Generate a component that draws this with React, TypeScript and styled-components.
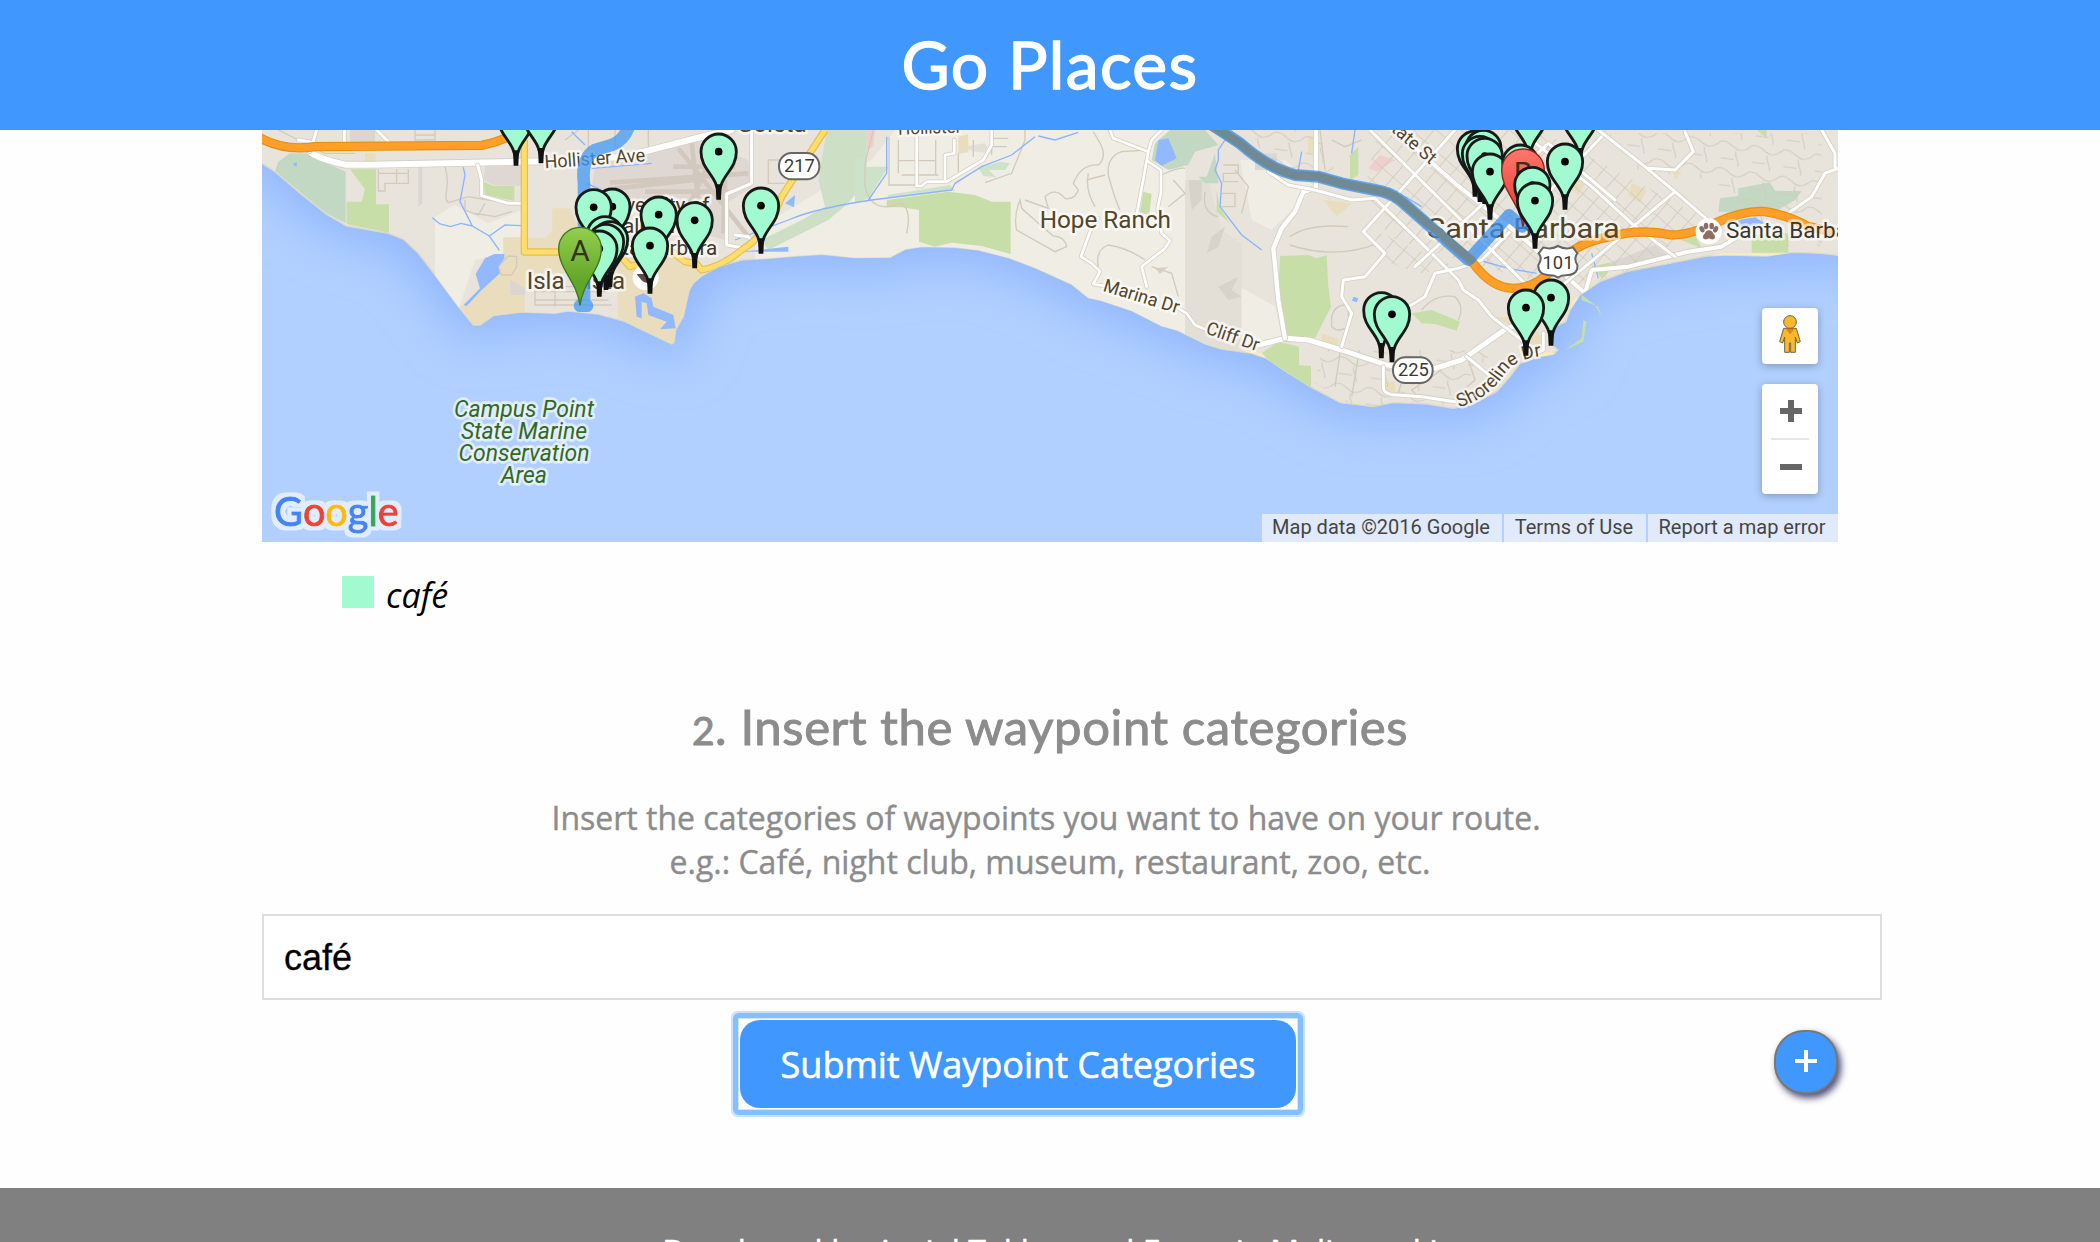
import React from "react";
import styled, { createGlobalStyle } from "styled-components";

const GlobalStyle = createGlobalStyle`
  * { box-sizing: border-box; }
  html, body { margin: 0; padding: 0; background: #fff; }
  body { height: 1242px; overflow: hidden; }
`;

const Page = styled.div`
  width: 2100px;
  height: 1242px;
  overflow: hidden;
  display: flex;
  flex-direction: column;
  background: #fefefe;
  font-family: "Open Sans", sans-serif;
`;

const Header = styled.header`
  flex: none;
  height: 130px;
  padding-bottom: 2px;
  background: #4098ff;
  display: flex;
  align-items: center;
  justify-content: center;
`;

const Title = styled.h1`
  margin: 0;
  font: 400 66px/80px Lato, sans-serif;
  letter-spacing: 1.4px;
  -webkit-text-stroke: 1.4px #fff;
  color: #fff;
  white-space: nowrap;
`;

const Content = styled.main`
  flex: none;
  width: 1576px;
  height: 1058px;
  margin: 0 auto;
  display: flex;
  flex-direction: column;
`;

const MapFrame = styled.section`
  position: relative;
  flex: none;
  height: 412px;
  overflow: hidden;
  background: #b1d0ff;
`;

const MapDrawing = styled.svg`
  display: block;
  width: 1576px;
  height: 412px;
  font-family: Roboto, sans-serif;
`;

const MapControls = styled.div`
  position: absolute;
  right: 20px;
  top: 178px;
  display: flex;
  flex-direction: column;
  gap: 20px;
`;

const ControlBox = styled.div<{ $height: number }>`
  width: 56px;
  height: ${(p) => p.$height}px;
  border-radius: 4px;
  background: #fff;
  box-shadow: 0 2px 8px rgba(0, 0, 0, 0.28);
  display: flex;
  flex-direction: column;
  align-items: center;
  justify-content: center;
`;

const PegmanIcon = styled.svg`
  margin-bottom: 4px;
`;

const ZoomHalf = styled.button`
  flex: 1;
  width: 38px;
  padding: 0 0 0 2px;
  border: 0;
  background: none;
  display: grid;
  place-items: center;
  & + & { border-top: 2px solid #e6e6e6; }
`;

const Attribution = styled.div`
  position: absolute;
  right: 0;
  bottom: 0;
  display: flex;
  gap: 2px;
`;

const AttributionItem = styled.span<{ $width: number }>`
  width: ${(p) => p.$width}px;
  height: 28px;
  padding-right: 2px;
  background: #e1eafa;
  color: #444;
  font: 400 20px/26px Roboto, sans-serif;
  text-align: center;
  white-space: nowrap;
`;

const Legend = styled.div`
  flex: none;
  height: 98px;
  padding: 34px 0 0 80px;
  display: flex;
  gap: 12px;
  color: #000;
  font: italic 400 34px/38px "Open Sans", sans-serif;
`;

const Swatch = styled.span`
  width: 32px;
  height: 32px;
  background: #a1fad0;
`;

const Heading = styled.h2`
  flex: none;
  margin: 56px 0 0;
  height: 62px;
  font: 400 49px/60px Lato, sans-serif;
  letter-spacing: 0.6px;
  color: #8c8c8c;
  text-align: center;
  white-space: nowrap;
  -webkit-text-stroke: 1px #8c8c8c;
`;

const OldStyleFigure = styled.span`
  font-size: 39px;
`;

const Lead = styled.p`
  flex: none;
  margin: 38px 0 0;
  height: 106px;
  padding-right: 8px;
  font: 400 32px/44px "Open Sans", sans-serif;
  color: #8c8c8c;
  -webkit-text-stroke: 0.4px #8c8c8c;
  text-align: center;
  white-space: nowrap;
`;

const LeadLine = styled.span<{ $shift?: number }>`
  display: block;
  padding-left: ${(p) => p.$shift ?? 0}px;
`;

const CategoryInput = styled.input`
  flex: none;
  width: 1620px;
  height: 86px;
  margin-top: 12px;
  padding: 2px 20px 0;
  border: 2px solid #ddd;
  border-radius: 0;
  outline: none;
  background: #fff;
  color: #000;
  font: 400 36px/42px "Liberation Sans", Arial, sans-serif;
  -webkit-text-stroke: 0.3px #000;
`;

const Actions = styled.div`
  flex: none;
  height: 108px;
  padding-top: 20px;
  display: flex;
  justify-content: space-between;
`;

const FocusRing = styled.div`
  width: 560px;
  height: 92px;
  margin: -2px 0 0 476px;
  padding: 2px;
  border-radius: 2px;
  box-shadow: inset 0 0 0 1px #d2e7ff, 0 0 0 5px #84bfff, 0 0 0 7px #c9e2ff;
`;

const SubmitButton = styled.button`
  width: 556px;
  height: 88px;
  padding: 2px 0 0;
  border: 0;
  border-radius: 20px;
  background: #4098ff;
  color: #fff;
  font: 400 36px/48px "Open Sans", sans-serif;
  -webkit-text-stroke: 0.6px #fff;
`;

const AddButton = styled.button`
  width: 64px;
  height: 64px;
  margin-top: 10px;
  padding: 0 0 2px;
  border: 2px solid #777;
  border-radius: 30px;
  background: #4098ff;
  box-shadow: 3px 4px 7px rgba(20, 20, 75, 0.75);
  display: grid;
  place-items: center;
`;

const Footer = styled.footer`
  flex: none;
  height: 120px;
  padding-top: 42px;
  background: #808080;
  color: #fff;
  font: 400 32px/44px "Open Sans", sans-serif;
  letter-spacing: 0.1px;
  -webkit-text-stroke: 0.5px #fff;
  text-align: center;
  white-space: nowrap;
`;

const DROP = "M0,138 C-2,68 -53,58 -53,0 A53,53 0 1 1 53,0 C53,58 2,68 0,138 Z";

function Pin({ x, y }: { x: number; y: number }) {
  return (
    <g transform={`translate(${x} ${y - 2})`}>
      <path d={DROP} fill="#a1fad0" stroke="#151a18" strokeWidth="8.5" />
      <path d="M-9,98 L-7,144 H7 L9,98 Z" fill="#111" />
      <circle r="11.5" fill="#000" />
    </g>
  );
}

function LetterPin({ x, y, letter, from, to, edge }: { x: number; y: number; letter: string; from: string; to: string; edge: string }) {
  const id = "pin" + letter;
  return (
    <g transform={`translate(${x} ${y})`}>
      <defs>
        <linearGradient id={id} x1="0" y1="0" x2="0" y2="1">
          <stop offset="0" stopColor={from} />
          <stop offset="0.7" stopColor={to} />
        </linearGradient>
      </defs>
      <path d="M0,170 C-8,100 -64,62 -64,0 A64,64 0 1 1 64,0 C64,62 8,100 0,170 Z" fill={`url(#${id})`} stroke={edge} strokeWidth="4" />
      <text y="37" fontSize="90" textAnchor="middle" fill="#33331c">{letter}</text>
    </g>
  );
}

type LabelProps = { x?: number; y?: number; size?: number; width?: number; rotate?: number; color?: string; italic?: boolean; anchor?: "start" | "middle"; children: React.ReactNode };
function Label({ x = 0, y = 0, size = 72, width, rotate = 0, color = "#51452b", italic, anchor = "start", children }: LabelProps) {
  return (
    <text
      transform={`translate(${x} ${y}) rotate(${rotate})`}
      fontSize={size}
      textLength={width}
      lengthAdjust="spacingAndGlyphs"
      fill={color}
      fontStyle={italic ? "italic" : "normal"}
      textAnchor={anchor}
      stroke="#fff"
      strokeOpacity="0.6"
      strokeWidth="16"
      strokeLinejoin="round"
      paintOrder="stroke"
    >
      {children}
    </text>
  );
}

function Street({ d, w = 12 }: { d: string; w?: number }) {
  return (
    <g fill="none" strokeLinejoin="round" strokeLinecap="round">
      <path d={d} stroke="#d6d0c4" strokeWidth={w + 5} />
      <path d={d} stroke="#fff" strokeWidth={w} />
    </g>
  );
}

function Highway({ d, w = 22, fill = "#ff9f2a", edge = "#e3920f" }: { d: string; w?: number; fill?: string; edge?: string }) {
  return (
    <g fill="none" strokeLinejoin="round">
      <path d={d} stroke={edge} strokeWidth={w + 6} />
      <path d={d} stroke={fill} strokeWidth={w - 1} />
    </g>
  );
}

const LAND =
  "M0,0 H4800 V412 L4695,400 L4615,397 L4535,408 L4415,405 L4355,408 L4255,428 L4115,455 L4035,485 L3975,525 L3945,570 L3932,605 L3900,620 L3880,665 L3909,690 L3895,703 L3855,710 L3795,730 L3765,770 L3725,815 L3645,855 L3595,865 L3515,852 L3415,848 L3355,860 L3255,848 L3165,800 L3085,750 L3035,715 L2990,700 L2900,687 L2850,672 L2770,632 L2720,618 L2630,572 L2540,542 L2500,533 L2450,493 L2340,443 L2260,413 L2170,390 L2100,382 L2000,380 L1950,388 L1905,412 L1800,413 L1700,403 L1620,408 L1540,415 L1460,420 L1390,440 L1340,468 L1315,490 L1303,510 L1285,590 L1262,630 L1257,668 L1250,672 L1110,605 L1030,582 L940,573 L900,580 L800,576 L715,587 L675,615 L655,615 L610,560 L540,465 L490,400 L445,358 L400,340 L345,330 L275,318 L215,283 L135,220 L60,155 L21,130 L0,120 Z";

function MapBackdrop() {
  return (
    <MapDrawing viewBox="21 30 4728 1236" preserveAspectRatio="none">
      <defs>
        <clipPath id="land"><path d={LAND} /></clipPath>
        <filter id="shore" x="-5%" y="-30%" width="110%" height="170%"><feGaussianBlur stdDeviation="75" /></filter>
        <filter id="halo" x="-10%" y="-20%" width="120%" height="140%">
          <feMorphology in="SourceAlpha" operator="dilate" radius="11" result="grown" />
          <feFlood floodColor="#fff" floodOpacity="0.62" />
          <feComposite in2="grown" operator="in" result="edge" />
          <feMerge><feMergeNode in="edge" /><feMergeNode in="SourceGraphic" /></feMerge>
        </filter>
        <pattern id="blocks" width="42" height="48" patternUnits="userSpaceOnUse" patternTransform="rotate(41)">
          <path d="M0,0 H42 M0,0 V48" stroke="#d2cabb" strokeWidth="5" />
        </pattern>
        <pattern id="suburb" width="95" height="80" patternUnits="userSpaceOnUse" patternTransform="rotate(8)">
          <path d="M0,10 C25,5 35,35 60,30 S85,5 95,10 M42,34 C40,55 60,60 55,90 M0,60 H40" stroke="#d2cabb" strokeWidth="3" fill="none" />
        </pattern>
      </defs>

      <rect x="0" y="0" width="4800" height="1300" fill="#b1d0ff" />
      <path d={LAND} fill="#8fb5fd" stroke="#8fb5fd" strokeWidth="80" filter="url(#shore)" />
      <path d={LAND} fill="#e8e4dc" stroke="#dcd8c8" strokeWidth="4" />

      <g clipPath="url(#land)">
        {/* open country */}
        <path d="M540,290 L600,255 L700,310 L800,270 V352 L745,355 V400 L660,420 L610,570 L540,470 Z" fill="#f0ede5" />
        <path d="M1500,330 L1850,120 L1920,30 H2790 L2800,690 L2500,560 L2200,430 L1900,420 L1500,425 Z" fill="#f0ede5" />
        <path d="M3090,120 L3180,200 L3050,330 L2990,300 L2955,120 Z M2955,500 L3060,560 L3080,650 L2960,670 L2890,600 Z" fill="#f0ede5" />
        <path d="M2120,80 L2190,70 L2210,100 L2160,95 Z M2790,180 H2860 L2900,330 L2960,370 V690 H2790 Z" fill="#e4dfd6" />
        <path d="M2800,180 h40 v60 l-30,30 z M2870,350 l40,-30 -20,60 -35,20 z M2890,500 l60,-30 -20,40 30,20 -40,10 z M2700,445 l40,-5 -25,22 z" fill="#d8d3c9" />

        {/* parks and reserves */}
        <path d="M70,125 L105,100 H155 L215,130 L272,155 V310 L215,280 L140,220 L60,152 Z" fill="#c2d8c3" />
        <path d="M285,148 H363 V253 H402 V338 L275,312 V245 H320 L330,208 Z" fill="#c8dea8" />
        <path d="M685,185 L715,197 H778 V243 L690,225 Z M838,408 H905 V460 H838 Z" fill="#c8dea8" />
        <path d="M1715,30 H1835 V180 L1780,250 L1720,300 L1540,390 L1520,360 L1640,300 L1710,260 L1690,180 Z" fill="#cde0c5" />
        <path d="M1895,240 L2080,215 L2160,225 L2210,245 H2267 V402 L2180,378 L2090,368 L2040,380 L1992,365 V270 L1940,262 H1895 Z" fill="#c8dea8" />
        <path d="M1800,115 H1835 L1830,140 L1900,140 L1840,235 L1800,250 Z M1900,225 L2085,195 L2100,212 L1895,236 Z M2170,145 L2235,125 L2265,130 L2250,150 L2200,150 L2225,172 L2185,168 Z" fill="#cde3c9" />
        <path d="M2700,70 L2745,30 H2850 L2890,75 L2820,95 L2800,135 L2740,150 L2690,120 Z M2800,140 L2830,170 H2855 L2880,100 L2890,190 L2850,190 Z" fill="#c2d8c3" />
        <path d="M2665,215 L2690,222 L2683,285 L2655,278 Z M2885,210 L2895,265 L2925,310 L2885,275 Z" fill="#c8dea8" />
        <path d="M3075,408 L3160,405 L3185,415 L3215,405 L3220,500 L3228,560 L3180,655 L3085,645 L3070,520 Z" fill="#c8dea8" />
        <path d="M3020,700 L3070,665 L3132,680 V735 L3168,738 V802 L3080,755 Z" fill="#c8dea8" />
        <path d="M3470,580 L3530,570 L3615,605 L3605,632 L3540,612 L3500,610 Z M3285,105 L3310,80 V165 L3285,180 Z M4505,30 h30 v25 z" fill="#c8dea8" />
        <path d="M4395,235 L4450,228 V205 L4545,187 L4560,212 L4640,214 L4620,240 L4560,275 H4390 Z" fill="#c2d8c3" />
        <path d="M4490,345 L4600,340 L4600,398 L4490,398 Z M4265,355 L4320,345 L4340,385 Z M4010,440 L4095,420 L4040,475 Z" fill="#c8dea8" />

        {/* campus, schools and sand */}
        <path d="M745,352 H800 L870,355 L892,330 V265 H945 L985,355 V460 H810 V578 L715,587 L675,617 L655,617 L612,562 L640,550 L745,420 Z" fill="#e9ddbd" />
        <path d="M1090,430 L1150,400 L1250,390 L1330,440 L1340,470 L1300,520 L1255,675 L1110,605 L1088,590 Z" fill="#e9ddbd" />
        <path d="M810,460 H1060 V590 H810 Z" fill="#e8e4dc" />
        <path d="M330,100 h32 v25 h-32 z M2110,50 l30,-8 v55 l-30,5 z M3205,240 L3290,250 L3245,290 Z M3200,640 l50,18 v20 l-50,-15 z M3390,785 h30 v35 h-30 z M3159,50 h20 v50 h-20 z M3720,590 L3790,590 L3840,630 L3860,650 V700 L3790,630 Z M3955,170 l35,20 -20,35 -30,-20 z M4130,190 l45,20 -20,40 -35,-25 z M4250,145 l30,15 -20,18 z" fill="#e9ddbd" />
        <path d="M3375,105 L3420,120 L3365,155 L3340,145 Z M1835,30 h25 l-5,50 -20,10 z" fill="#eecfcb" />
        <path d="M3932,605 L3955,540 L4040,485 L4355,410 L4400,400 H4700 V414 L4535,412 L4355,414 L4115,462 L3990,530 Z M3850,690 l60,12 -60,20 z M2960,690 l60,10 20,22 z" fill="#f8ecc0" />

        {/* airport */}
        <path d="M690,135 H810 V198 L715,195 L685,180 Z M1020,130 L1330,60 L1480,120 L1490,200 L1400,260 L1410,360 L1300,330 L1120,250 L1010,210 Z" fill="#dfd8d2" />
        <path d="M1065,188 L1480,160 M1080,205 L1320,180 M1170,215 L1420,215 M1270,85 L1480,350 M1310,70 L1330,240 M1370,110 L1300,260 M1255,140 H1440 M1410,180 L1405,340" stroke="#d3c8be" strokeWidth="14" fill="none" />
        <path d="M285,30 h75 v55 h-75 z M490,140 h12 v110 l-12,10 z M765,480 l45,25 v20 h-45 z M3000,100 H3065 V150 H3000 Z M4060,430 L4200,375 L4245,410 L4100,440 Z" fill="#dbd6cf" />

        {/* small streets */}
        <path d="M3370,30 H3855 L4360,300 L4300,340 L4120,460 L3960,500 L3830,480 L3640,430 L3400,350 L3330,200 Z" fill="url(#blocks)" />
        <path d="M3330,320 L3600,440 L3500,460 L3370,420 Z" fill="url(#blocks)" />
        <path d="M4060,40 H4700 V380 H4560 L4380,180 L4150,150 Z M3200,690 H3720 L3560,860 H3300 L3180,790 Z M2960,30 H3180 L3250,170 H3100 Z" fill="url(#suburb)" />
        <g fill="none" stroke="#d2cabb" strokeWidth="4">
          <path d="M370,148 V213 H390 V190 H460 V148 M425,148 V190 M370,160 H462 M480,30 V60 H540 V30 M480,45 H540 M570,140 C590,200 560,230 580,248 L640,230 L700,240 L760,245 M630,240 V270 L670,285 L690,250 M660,280 L720,290 L770,275" />
          <path d="M840,500 H1050 M840,515 H1050 M840,540 H1060 M840,555 H1070 M840,490 V555 M900,490 V560 M730,440 L760,408 L785,410 V440 L770,465 H740 Z M930,60 L970,30 M1000,90 V30 M1080,85 V30 M1180,80 V30 M1540,120 V190 H1590 M1540,120 H1600 M70,30 L130,60 L210,100 H300" />
          <path d="M1902,50 V195 H1985 M1930,60 V160 M1930,122 H2040 M1940,165 H2050 M2042,60 V165 M2110,100 V155 M2155,60 V110 M2210,40 V105 M2210,55 H2260 M2210,80 H2255 M2190,188 L2270,160 L2310,60 V30 M1855,30 L1830,130 V200 Q1845,265 1900,260 L1940,250 Q1970,270 1955,340" />
          <path d="M2295,240 Q2275,290 2285,330 L2400,395 L2435,380 Q2430,350 2395,348 L2350,310 L2300,265 Z M2310,240 L2380,265 L2370,230 Q2400,200 2430,235 Q2460,240 2470,210 L2455,190 Q2480,130 2530,135 Q2560,110 2530,60 L2515,35 M2500,160 Q2490,210 2520,260 M2560,165 Q2580,240 2595,270 M2560,165 Q2555,110 2600,95 L2680,90 M2495,180 L2550,165 M2530,440 Q2520,390 2560,375 Q2620,385 2670,420 M2690,440 L2750,460 L2770,530 M2720,165 Q2770,140 2790,145 M2755,180 L2790,220 L2740,260" />
          <path d="M2905,135 H2950 V160 H2905 V185 H2950 M2900,220 H2940 V260 H2900 M2850,215 Q2840,280 2890,290 M2940,150 L2980,200 L2960,280 M3195,30 L3210,150 M3230,60 L3270,80 L3320,60 M3105,350 Q3160,310 3280,320 M3105,375 Q3240,420 3370,370 M3230,590 Q3240,550 3280,555 V620 Q3250,640 3230,620 Z M3500,570 Q3540,520 3600,530 Q3630,560 3610,600 M3255,700 L3240,800 M3310,710 L3290,830 M3450,750 L3430,820 M3560,750 L3470,810 L3490,830 M3640,720 L3660,780 L3600,830" />
        </g>

        {/* creeks and lagoons */}
        <g fill="#92b8ff" stroke="none">
          <path d="M718,402 H748 V415 L730,440 L735,460 L680,510 L635,558 L625,556 L675,505 L662,462 L690,415 Z M1140,530 L1165,520 L1190,535 L1195,560 L1255,585 L1262,625 L1215,628 L1235,605 L1180,585 L1175,550 L1160,545 V595 L1145,590 Z M2710,60 L2740,55 L2765,115 L2720,137 L2700,120 Z M4450,300 L4500,292 L4530,310 L4450,325 Z M3295,530 l15,5 -5,12 -14,-5 z M113,132 l12,-6 v15 z M1590,250 L1620,225 L1617,262 Z M1460,395 L1600,380 V395 Z" />
        </g>
        <g fill="none" stroke="#8bb4ff" strokeWidth="4">
          <path d="M625,142 L630,165 L615,245 L652,318 L703,348 L733,391 M532,293 L555,312 L587,320 L618,310 L652,318 M703,348 L750,315 L800,317 M1010,145 L1190,130 M995,190 L1040,210 M950,35 L990,75" />
          <path d="M1440,360 L1600,300 Q1680,265 1850,240 L2090,210 L2100,190 L2180,140 L2270,105 L2340,50 M1840,240 L1895,160 V50 M2350,48 L2400,60 L2470,37 M2920,45 L2890,90 V120 L2880,150 L2900,190 L2895,260 L2960,345 L3020,390 M3300,30 L3290,100 M3140,95 L3130,150 M3450,230 L3500,260 M3670,420 L3760,445 L3845,460 M4010,400 L4030,475" />
        </g>

        {/* main streets */}
        <Street w={18} d="M165,95 Q180,112 270,134 L350,134 L800,125 L900,124 L1110,110 L1360,45 L1430,30" />
        <Street w={9} d="M185,30 L165,95 M268,30 V65 M365,30 L400,65 M130,60 L180,68 M668,135 L680,180 V227 L760,250 H800" />
        <Street w={9} d="M1490,30 V190 L1415,222 V375 L1470,385 L1495,370 L1480,350 L1440,345" />
        <Street w={8} d="M1985,50 V198 H2000 L2015,185 L2075,185 L2185,120 L2210,75 V30 M2070,185 V105 L2098,100 V60 M2565,30 L2575,55 L2680,95 L2690,60 L2720,30 M2680,95 L2645,285 M2680,125 L2718,150 V215 L2708,265 L2720,340 L2745,362 L2730,385 L2660,440 L2675,500 M2530,295 L2505,335 L2478,410 L2510,430 L2535,455 L2515,492 L2560,500 M2770,565 L2795,580 L2820,615 L2855,630" />
        <Street w={15} d="M3010,675 L3090,655 L3160,660 L3260,690 L3395,735 L3540,745 L3620,720 L3755,625 L3810,610" />
        <Street w={13} d="M3090,655 L3070,540 L3055,385 L3080,325 L3120,275 L3145,215 L3180,205 M3183,30 V205" />
        <Street w={9} d="M3040,155 L3100,195 L3180,210 L3290,240 L3360,235 L3500,370 L3610,480 L3625,510 L3670,540 L3710,590 L3800,660 L3825,690 M3260,680 L3290,580 L3260,530 L3265,480 L3330,470 L3390,400 L3325,335 L3600,30 M3460,560 L3510,530 L3540,460 L3610,445 L3680,420 L3810,290 L4050,40 M3385,740 V800 Q3385,825 3430,825 L3500,830 L3600,845 M3635,710 L3720,780 M3345,30 L3830,510 M3865,640 V690 L3820,710" />
        <Street w={12} d="M3420,30 L3600,190 L3800,350 L3990,520 M3990,520 L4010,450 L4120,440 L4300,395 L4400,380 L4440,355" />
        <Street w={9} d="M3790,30 L4010,200 L4130,310 L4260,410 M4030,30 L4170,140 L4260,215 L4370,310 M3480,440 L3880,70 L4080,240 M3930,490 L4260,215 M4180,145 L4260,150 L4315,95 L4290,35 M4600,280 L4670,230 L4710,160 L4749,145 M4700,30 L4740,100 V150" />

        {/* arterials and freeway */}
        <Highway d="M0,45 Q80,95 180,80 L680,76 Q740,65 800,30" />
        <Highway w={16} fill="#ffdd6b" edge="#e2bf52" d="M808,60 V396 H920 L1090,400 L1125,440 L1180,425 L1250,395 L1290,425 L1325,432 L1340,450 Q1400,440 1460,390 Q1540,340 1580,230 L1710,30" />
      </g>

      <Highway d="M2840,0 L2955,70 Q3040,145 3120,165 L3190,170 L3260,190 L3360,210 Q3400,215 3435,240 L3655,430 Q3710,505 3775,505 Q3840,505 3890,450 Q3950,375 4040,355 L4110,340 Q4180,330 4250,345 Q4310,345 4390,305 Q4470,270 4530,275 Q4600,285 4660,320 L4760,340" />
      <path d="M3980,540 L4030,560 L4040,590 L4020,555 L3980,525 Z M3985,600 L3995,605 L3985,665 L3930,690 L3980,655 Z" fill="#c8dea8" />

      {/* place names */}
      <Label x={815} y={508} size={72} width={295}>Isla Vista</Label>
      <Label x={870} y={145} size={56} width={302} rotate={-4}>Hollister Ave</Label>
      <Label x={1445} y={35} size={72} width={210}>Goleta</Label>
      <Label x={1930} y={44} size={54} width={190} rotate={-2}>Hollister</Label>
      <Label x={1192} y={275} size={62} anchor="middle" color="#42372b">University of</Label>
      <Label x={1196} y={340} size={62} anchor="middle" color="#42372b">California</Label>
      <Label x={1192} y={405} size={62} anchor="middle" color="#42372b">Santa Barbara</Label>
      <Label x={2354} y={325} size={73} width={394}>Hope Ranch</Label>
      <Label x={2542} y={512} size={55} width={235} rotate={17}>Marina Dr</Label>
      <Label x={2850} y={640} size={55} width={165} rotate={19}>Cliff Dr</Label>
      <Label x={3382} y={10} size={54} width={190} rotate={41}>State St</Label>
      <Label x={3516} y={354} size={84} width={578}>Santa Barbara</Label>
      <Label x={4413} y={355} size={64} width={424} color="#39362d">Santa Barbara</Label>
      <path id="shoreline" d="M3612,862 Q3700,835 3745,768 Q3775,718 3860,708" fill="none" />
      <text fontSize="56" fill="#51452b" stroke="#fff" strokeOpacity=".6" strokeWidth="14" paintOrder="stroke" textLength="300">
        <textPath href="#shoreline">Shoreline Dr</textPath>
      </text>
      {["Campus Point", "State Marine", "Conservation", "Area"].map((line, i) => (
        <Label key={line} x={807} y={890 + i * 66} size={69} italic anchor="middle" color="#33691e">{line}</Label>
      ))}

      {/* zoo and campus badges */}
      <circle cx="1172" cy="472" r="39" fill="#fff" />
      <path d="M1145,462 h50 l-8,22 q-12,12 -28,-4 z" fill="#5d4a42" />
      <circle cx="4361" cy="334" r="39" fill="#fff" />
      <g fill="#8d6e63">
        <ellipse cx="4341" cy="328" rx="7" ry="10" transform="rotate(-25 4341 328)" />
        <ellipse cx="4353" cy="318" rx="7" ry="10" />
        <ellipse cx="4370" cy="318" rx="7" ry="10" />
        <ellipse cx="4382" cy="328" rx="7" ry="10" transform="rotate(25 4382 328)" />
        <path d="M4362,331 q8,0 13,10 q9,8 3,15 q-7,5 -16,-1 q-10,6 -16,1 q-6,-7 3,-15 q5,-10 13,-10 z" />
      </g>

      {/* road shields */}
      <g stroke="#666" strokeWidth="6" fill="#fff">
        <rect x="1572" y="99" width="121" height="79" rx="38" />
        <rect x="3414" y="712" width="119" height="77" rx="37" />
        <path d="M3865,382 Q3887,390 3909,378 Q3932,390 3954,382 L3967,400 Q3955,415 3967,435 Q3970,462 3940,465 L3920,467 L3909,473 L3898,467 L3878,465 Q3848,462 3850,435 Q3864,415 3851,400 Z" />
      </g>
      <g fontSize="55" fill="#3a3a32" textAnchor="middle">
        <text x="1633" y="157">217</text>
        <text x="3475" y="769">225</text>
        <text x="3909" y="447">101</text>
      </g>

      {/* route */}
      <g fill="none" strokeLinecap="round" strokeLinejoin="round">
        <path d="M975,557 H996 M987,550 V190 Q978,115 1020,90 L1070,75 Q1110,60 1125,10" stroke="#4398f4" strokeOpacity=".76" strokeWidth="38" />
        <path d="M2820,-20 L2955,70 Q3040,145 3120,165 L3190,170 L3260,190 L3360,210 Q3400,215 3435,240 L3640,420 L3762,285 L3802,320" stroke="#3c91ee" strokeOpacity=".76" strokeWidth="36" />
        <path d="M2820,-20 L2955,70 Q3040,145 3120,165 L3190,170 L3260,190 L3360,210 Q3400,215 3435,240 L3650,420" stroke="#6f8995" strokeWidth="24" />
      </g>

      {/* café markers */}
      {[
        [783, -5], [858, -12], [1391, 97], [1518, 259], [1072, 262], [1016, 264], [1211, 286], [1319, 303],
        [1050, 345], [1065, 360], [1053, 368], [1033, 388], [1185, 379],
        [3660, 88], [3685, 86], [3675, 104], [3689, 110], [3705, 157],
        [3823, -15], [3975, -12], [3796, 130], [3930, 127],
      ].map(([x, y], i) => <Pin key={i} x={x} y={y} />)}
      <LetterPin x={975} y={386} letter="A" from="#94cf4d" to="#61a52a" edge="#39791a" />
      <LetterPin x={3804} y={151} letter="B" from="#ff776b" to="#e9473e" edge="#8e231c" />
      {[[3832, 197], [3840, 244], [3888, 535], [3813, 565], [3379, 573], [3411, 585]].map(([x, y], i) => <Pin key={i} x={x} y={y} />)}

      {/* provider logo */}
      <text x="57" y="1219" fontSize="120" fontFamily="Lato, sans-serif" fontWeight="400" textLength="374" lengthAdjust="spacingAndGlyphs" strokeWidth="3" filter="url(#halo)">
        <tspan fill="#4285f4" stroke="#4285f4">G</tspan><tspan fill="#ea4335" stroke="#ea4335">o</tspan><tspan fill="#fbbc05" stroke="#fbbc05">o</tspan><tspan fill="#4285f4" stroke="#4285f4">g</tspan><tspan fill="#34a853" stroke="#34a853">l</tspan><tspan fill="#ea4335" stroke="#ea4335">e</tspan>
      </text>
    </MapDrawing>
  );
}

function Pegman() {
  return (
    <PegmanIcon width="22" height="38" viewBox="0 0 66 114">
      <path d="M14,40 H52 L64,80 L55,84 L49,66 V112 H35 V84 H31 V112 H17 V66 L11,84 L2,80 Z" fill="#fbb829" stroke="#6d6448" strokeWidth="3" />
      <path d="M20,41 H47 L33,58 Z" fill="#e5821c" />
      <circle cx="33" cy="21" r="19" fill="#fbb829" stroke="#6d6448" strokeWidth="3" />
    </PegmanIcon>
  );
}

export default function App() {
  return (
    <Page>
      <GlobalStyle />
      <Header><Title>Go Places</Title></Header>
      <Content>
        <MapFrame>
          <MapBackdrop />
          <MapControls>
            <ControlBox $height={56}><Pegman /></ControlBox>
            <ControlBox $height={110}>
              <ZoomHalf aria-label="Zoom in">
                <svg width="22" height="22" viewBox="0 0 22 22"><path d="M0,11 H22 M11,0 V22" stroke="#666" strokeWidth="6" /></svg>
              </ZoomHalf>
              <ZoomHalf aria-label="Zoom out">
                <svg width="22" height="22" viewBox="0 0 22 22"><path d="M0,11 H22" stroke="#666" strokeWidth="6" /></svg>
              </ZoomHalf>
            </ControlBox>
          </MapControls>
          <Attribution>
            <AttributionItem $width={240}>Map data ©2016 Google</AttributionItem>
            <AttributionItem $width={142}>Terms of Use</AttributionItem>
            <AttributionItem $width={190}>Report a map error</AttributionItem>
          </Attribution>
        </MapFrame>
        <Legend><Swatch /><span>café</span></Legend>
        <Heading><OldStyleFigure>2</OldStyleFigure>. Insert the waypoint categories</Heading>
        <Lead>
          <LeadLine>Insert the categories of waypoints you want to have on your route.</LeadLine>
          <LeadLine $shift={8}>e.g.: Café, night club, museum, restaurant, zoo, etc.</LeadLine>
        </Lead>
        <CategoryInput defaultValue="café" />
        <Actions>
          <FocusRing><SubmitButton>Submit Waypoint Categories</SubmitButton></FocusRing>
          <AddButton aria-label="Add category">
            <svg width="22" height="22" viewBox="0 0 22 22"><path d="M0,11 H22 M11,0 V22" stroke="#fff" strokeWidth="4" /></svg>
          </AddButton>
        </Actions>
      </Content>
      <Footer>Developed by Amiel Takkar and Eugenia Malinowski</Footer>
    </Page>
  );
}
